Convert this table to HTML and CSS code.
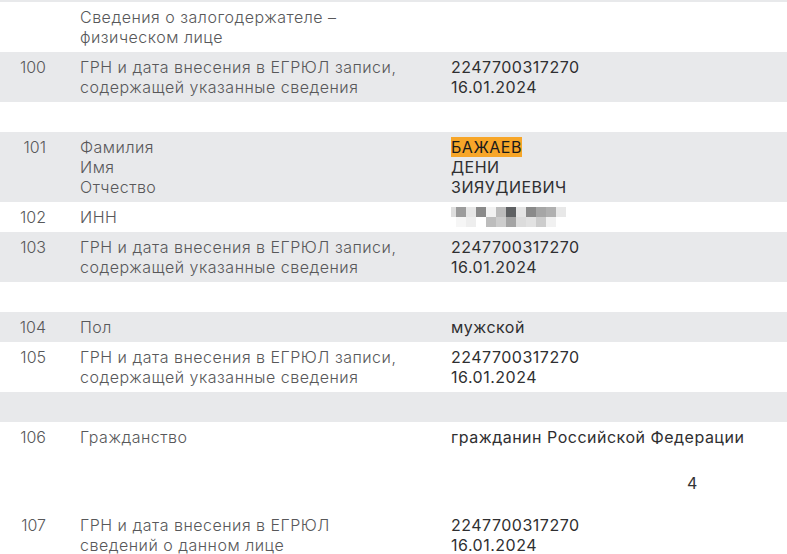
FILE: index.html
```html
<!DOCTYPE html>
<html lang="ru">
<head>
<meta charset="utf-8">
<link rel="stylesheet" href="styles.css">
</head>
<body>
<div class="sheet">
  <div class="row gray strip"></div>
  <div class="row">
    <div class="num"></div>
    <div class="label">Сведения о залогодержателе –<br>физическом лице</div>
    <div class="val"></div>
  </div>
  <div class="row gray">
    <div class="num">100</div>
    <div class="label">ГРН и дата внесения в ЕГРЮЛ записи,<br>содержащей указанные сведения</div>
    <div class="val">2247700317270<br>16.01.2024</div>
  </div>
  <div class="row empty"></div>
  <div class="row gray">
    <div class="num">101</div>
    <div class="label">Фамилия<br>Имя<br>Отчество</div>
    <div class="val"><span class="hl">БАЖАЕВ</span><br>ДЕНИ<br>ЗИЯУДИЕВИЧ</div>
  </div>
  <div class="row">
    <div class="num">102</div>
    <div class="label">ИНН</div>
    <div class="val">
      <svg class="blur" width="120" height="20" viewBox="0 0 120 20" aria-label="скрыто">
        <rect x="0" y="0" width="5" height="10" fill="#dedede"/>
        <rect x="5" y="0" width="10" height="10" fill="#9c9c9c"/>
        <rect x="15" y="0" width="10" height="10" fill="#e6e6e6"/>
        <rect x="25" y="0" width="10" height="10" fill="#8a8a8a"/>
        <rect x="35" y="0" width="10" height="10" fill="#f2f2f2"/>
        <rect x="45" y="0" width="10" height="10" fill="#bcbcbc"/>
        <rect x="55" y="0" width="10" height="10" fill="#5f6163"/>
        <rect x="65" y="0" width="10" height="10" fill="#e4e4e4"/>
        <rect x="75" y="0" width="10" height="10" fill="#8a8a8a"/>
        <rect x="85" y="0" width="10" height="10" fill="#a6a6a6"/>
        <rect x="95" y="0" width="10" height="10" fill="#b0b0b0"/>
        <rect x="105" y="0" width="10" height="10" fill="#e8e8e8"/>
        <rect x="5" y="10" width="10" height="10" fill="#f6f6f6"/>
        <rect x="15" y="10" width="10" height="10" fill="#eeeeee"/>
        <rect x="35" y="10" width="10" height="10" fill="#bdbdbd"/>
        <rect x="45" y="10" width="10" height="10" fill="#cdcdcd"/>
        <rect x="55" y="10" width="10" height="10" fill="#a4a4a4"/>
        <rect x="65" y="10" width="10" height="10" fill="#dcdcdc"/>
        <rect x="75" y="10" width="10" height="10" fill="#e2e2e2"/>
        <rect x="85" y="10" width="10" height="10" fill="#cccccc"/>
        <rect x="95" y="10" width="10" height="10" fill="#f1f1f1"/>
      </svg>
    </div>
  </div>
  <div class="row gray">
    <div class="num">103</div>
    <div class="label">ГРН и дата внесения в ЕГРЮЛ записи,<br>содержащей указанные сведения</div>
    <div class="val">2247700317270<br>16.01.2024</div>
  </div>
  <div class="row empty"></div>
  <div class="row gray">
    <div class="num">104</div>
    <div class="label">Пол</div>
    <div class="val">мужской</div>
  </div>
  <div class="row">
    <div class="num">105</div>
    <div class="label">ГРН и дата внесения в ЕГРЮЛ записи,<br>содержащей указанные сведения</div>
    <div class="val">2247700317270<br>16.01.2024</div>
  </div>
  <div class="row gray empty"></div>
  <div class="row">
    <div class="num">106</div>
    <div class="label">Гражданство</div>
    <div class="val">гражданин Российской Федерации</div>
  </div>
  <div class="pagenum">4</div>
  <div class="row">
    <div class="num">107</div>
    <div class="label">ГРН и дата внесения в ЕГРЮЛ<br>сведений о данном лице</div>
    <div class="val">2247700317270<br>16.01.2024</div>
  </div>
</div>
</body>
</html>
```

FILE: styles.css
```css
html, body {
  margin: 0;
  padding: 0;
  background: #ffffff;
}
body {
  font-family: Inter, "Noto Sans", sans-serif;
  font-size: 16px;
  line-height: 20px;
  letter-spacing: 0.5px;
  color: #58585a;
}
.sheet {
  display: flex;
  flex-direction: column;
}
.row {
  display: grid;
  grid-template-columns: 46px 405px 1fr;
  padding: 5px 0;
  min-height: 20px;
}
.row.gray {
  background: #e8e9eb;
}
.row.strip {
  min-height: 0;
  height: 2px;
  padding: 0;
}
.num {
  text-align: right;
  font-weight: 300;
  letter-spacing: 0;
}
.label {
  padding-left: 34px;
  font-weight: 300;
}
.val {
  color: #2f2f31;
  font-weight: 400;
  letter-spacing: 0.5px;
}
.hl {
  background: #f7a629;
  color: #1a1a1a;
}
.blur {
  display: block;
}
.pagenum {
  height: 20px;
  padding: 21px 0 17px 687px;
  color: #333;
  font-weight: 400;
}
```
